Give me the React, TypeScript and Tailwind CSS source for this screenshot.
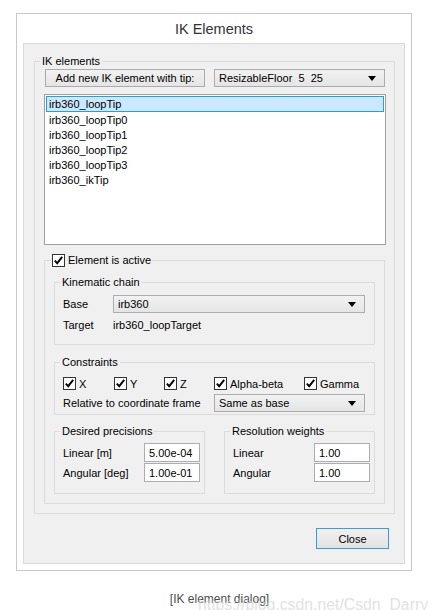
import React from "react";

function Check() {
  return (
    <span className="inline-flex w-[13px] h-[13px] shrink-0 items-center justify-center border border-[#333333] bg-white">
      <svg width="11" height="11" viewBox="0 0 11 11">
        <path d="M1.8 5.6 L4.2 8.2 L9.2 1.8" fill="none" stroke="#000" strokeWidth="1.9" />
      </svg>
    </span>
  );
}

function Arrow() {
  return (
    <svg width="8" height="5" viewBox="0 0 8 5" className="shrink-0">
      <path d="M0 0 H8 L4 5 Z" fill="#000" />
    </svg>
  );
}

function Combo({ text, className }: { text: string; className: string }) {
  return (
    <div
      className={
        "flex h-[18px] items-center justify-between border border-[#acacac] bg-gradient-to-b from-[#f2f2f2] to-[#e5e5e5] pl-[4px] pr-[8px] " +
        className
      }
    >
      <span className="whitespace-pre">{text}</span>
      <Arrow />
    </div>
  );
}

function Input({ value }: { value: string }) {
  return (
    <div className="flex h-[19px] w-[56px] items-center border border-[#abadb3] bg-white pl-[4px]">
      {value}
    </div>
  );
}

const items = [
  "irb360_loopTip",
  "irb360_loopTip0",
  "irb360_loopTip1",
  "irb360_loopTip2",
  "irb360_loopTip3",
  "irb360_ikTip",
];

export default function App() {
  return (
    <div className="relative h-[610px] w-[439px] bg-white font-['Liberation_Sans',Arial,sans-serif] text-[11px] leading-[14px] text-black">
      <div className="ml-[16px] mt-[13px] flex h-[558px] w-[396px] flex-col border border-[#c8c8c8] bg-white">
        <div className="flex h-[29px] items-center justify-center text-[14.5px] text-[#333333]">
          IK Elements
        </div>
        <div className="mx-[6px] mb-[6px] flex flex-1 flex-col border border-[#dadada] bg-[#f0f0f0]">
          {/* IK elements group */}
          <fieldset className="ml-[10px] mr-[9px] mt-[10px] border border-[#dcdcdc] p-0">
            <legend className="ml-[5px] px-[2px] leading-[14px]">IK elements</legend>
            <div className="flex flex-col pb-[9px] pl-[9px] pr-[8px] pt-[1px]">
              <div className="mx-[1px] flex gap-[9px]">
                <div className="flex h-[18px] w-[160px] items-center justify-center border border-[#acacac] bg-gradient-to-b from-[#f2f2f2] to-[#e5e5e5]">
                  Add new IK element with tip:
                </div>
                <Combo text="ResizableFloor  5  25" className="flex-1" />
              </div>
              <div className="mt-[7px] flex h-[151px] flex-col border border-[#a0a0a0] bg-white pt-[1px]">
                {items.map((it, i) => (
                  <div
                    key={it}
                    className={
                      i === 0
                        ? "mx-[1px] flex h-[16px] items-center border border-[#26a0da] bg-[#cce8ff] px-[2px]"
                        : "mx-[1px] flex h-[15px] items-center border border-transparent px-[2px]"
                    }
                  >
                    {it}
                  </div>
                ))}
              </div>

              {/* Element is active group */}
              <fieldset className="mr-[1px] mt-[8px] border border-[#dcdcdc] p-0">
                <legend className="ml-[6px] flex items-center gap-[3px] px-[1px] leading-[14px]">
                  <Check />
                  <span>Element is active</span>
                </legend>
                <div className="flex flex-col pb-[9px] pl-[9px] pr-[9px] pt-[8px]">
                  {/* Kinematic chain */}
                  <fieldset className="border border-[#dcdcdc] p-0">
                    <legend className="ml-[5px] px-[2px] leading-[14px]">Kinematic chain</legend>
                    <div className="flex flex-col pb-[12px] pl-[8px] pr-[9px] pt-[6px]">
                      <div className="flex items-center">
                        <span className="w-[50px]">Base</span>
                        <Combo text="irb360" className="flex-1" />
                      </div>
                      <div className="mt-[5px] flex h-[14px] items-center">
                        <span className="w-[50px]">Target</span>
                        <span>irb360_loopTarget</span>
                      </div>
                    </div>
                  </fieldset>

                  {/* Constraints */}
                  <fieldset className="mt-[10px] border border-[#dcdcdc] p-0">
                    <legend className="ml-[5px] px-[2px] leading-[14px]">Constraints</legend>
                    <div className="flex flex-col pb-[2px] pl-[8px] pr-[9px] pt-[8px]">
                      <div className="flex h-[13px] items-center">
                        <div className="flex w-[51px] items-center gap-[3px]">
                          <Check />
                          <span>X</span>
                        </div>
                        <div className="flex w-[50px] items-center gap-[3px]">
                          <Check />
                          <span>Y</span>
                        </div>
                        <div className="flex w-[50px] items-center gap-[3px]">
                          <Check />
                          <span>Z</span>
                        </div>
                        <div className="flex w-[90px] items-center gap-[3px]">
                          <Check />
                          <span>Alpha-beta</span>
                        </div>
                        <div className="flex items-center gap-[3px]">
                          <Check />
                          <span>Gamma</span>
                        </div>
                      </div>
                      <div className="mt-[4px] flex items-center">
                        <span className="w-[151px]">Relative to coordinate frame</span>
                        <Combo text="Same as base" className="flex-1" />
                      </div>
                    </div>
                  </fieldset>

                  {/* Precisions / weights */}
                  <div className="mt-[9px] flex gap-[19px]">
                    <fieldset className="w-[151px] border border-[#dcdcdc] p-0">
                      <legend className="ml-[5px] px-[2px] leading-[14px]">Desired precisions</legend>
                      <div className="flex flex-col gap-[1px] pb-[11px] pl-[8px] pr-[4px] pt-[5px]">
                        <div className="flex items-center justify-between">
                          <span>Linear [m]</span>
                          <Input value="5.00e-04" />
                        </div>
                        <div className="flex items-center justify-between">
                          <span>Angular [deg]</span>
                          <Input value="1.00e-01" />
                        </div>
                      </div>
                    </fieldset>
                    <fieldset className="w-[151px] border border-[#dcdcdc] p-0">
                      <legend className="ml-[5px] px-[2px] leading-[14px]">Resolution weights</legend>
                      <div className="flex flex-col gap-[1px] pb-[11px] pl-[8px] pr-[4px] pt-[5px]">
                        <div className="flex items-center justify-between">
                          <span>Linear</span>
                          <Input value="1.00" />
                        </div>
                        <div className="flex items-center justify-between">
                          <span>Angular</span>
                          <Input value="1.00" />
                        </div>
                      </div>
                    </fieldset>
                  </div>
                </div>
              </fieldset>
            </div>
          </fieldset>

          <div className="mr-[15px] mt-[14px] flex justify-end">
            <div className="flex h-[21px] w-[73px] items-center justify-center border border-[#3c9ae8] bg-gradient-to-b from-[#f0f0f0] to-[#e3e3e3]">
              Close
            </div>
          </div>
        </div>
      </div>
      <div className="mt-[21px] flex justify-center font-['Liberation_Sans',sans-serif] text-[12px] leading-[14px] text-[#4d4d4d]">
        [IK element dialog]
      </div>
      <div className="absolute left-[198px] top-[583px] whitespace-nowrap font-['Liberation_Sans',sans-serif] text-[15.8px] leading-[18px] text-[#d4d4d4]/70">
        https://blog.csdn.net/Csdn_Darry
      </div>
    </div>
  );
}
